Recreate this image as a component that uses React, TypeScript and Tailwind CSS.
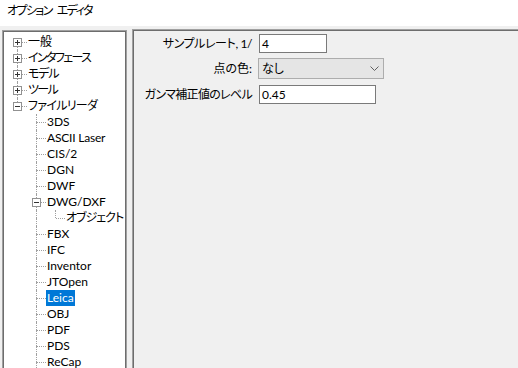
import React from 'react';

type Row = { t: string; d: number; box?: '+' | '-'; last?: boolean; first?: boolean; sel?: boolean; tr?: string };

const rows: Row[] = [
  { t: '一般', d: 0, box: '+', first: true },
  { t: 'インタフェース', d: 0, box: '+', tr: 'tracking-[-1.6px]' },
  { t: 'モデル', d: 0, box: '+', tr: 'tracking-[-1.2px]' },
  { t: 'ツール', d: 0, box: '+', tr: 'tracking-[-1.6px]' },
  { t: 'ファイルリーダ', d: 0, box: '-', last: true, tr: 'tracking-[-0.7px]' },
  { t: '3DS', d: 1 },
  { t: 'ASCII Laser', d: 1, tr: 'tracking-[-0.2px]' },
  { t: 'CIS/2', d: 1 },
  { t: 'DGN', d: 1 },
  { t: 'DWF', d: 1 },
  { t: 'DWG/DXF', d: 1, box: '-' },
  { t: 'オブジェクト プロパティ', d: 2, last: true, tr: 'tracking-[-1px]' },
  { t: 'FBX', d: 1 },
  { t: 'IFC', d: 1 },
  { t: 'Inventor', d: 1 },
  { t: 'JTOpen', d: 1 },
  { t: 'Leica', d: 1, sel: true },
  { t: 'OBJ', d: 1 },
  { t: 'PDF', d: 1 },
  { t: 'PDS', d: 1 },
  { t: 'ReCap', d: 1 },
];

const VLine = ({ top, bottom }: { top: boolean; bottom: boolean }) => (
  <>
    {top && <span className="absolute left-[9px] top-0 h-[8px] border-l border-dotted border-[#a0a0a0]" />}
    {bottom && <span className="absolute left-[9px] top-[8px] h-[8px] border-l border-dotted border-[#a0a0a0]" />}
  </>
);

const ExpandBox = ({ kind }: { kind: '+' | '-' }) => (
  <span className="absolute left-[5px] top-[4px] h-[9px] w-[9px] border border-[#919191] bg-white">
    <span className="absolute left-[1px] top-[3px] h-px w-[5px] bg-[#333]" />
    {kind === '+' && <span className="absolute left-[3px] top-[1px] h-[5px] w-px bg-[#333]" />}
  </span>
);

const TreeRow = ({ r }: { r: Row }) => {
  // ancestor columns: level 0 ended (ファイルリーダ is last), level 1 continues
  const ancestors = [];
  for (let i = 0; i < r.d; i++) {
    ancestors.push(
      <span key={i} className="relative h-4 w-[19px] shrink-0">
        {i === 1 && <VLine top bottom />}
      </span>
    );
  }
  return (
    <div className="flex h-4 items-center whitespace-nowrap">
      {ancestors}
      <span className="relative h-4 w-[19px] shrink-0">
        <VLine top={!r.first} bottom={!r.last} />
        <span className="absolute left-[10px] top-[8px] w-[9px] border-t border-dotted border-[#a0a0a0]" />
        {r.box && <ExpandBox kind={r.box} />}
      </span>
      <span className={`px-px leading-[16px] ${r.tr ?? ''} ${r.sel ? 'bg-[#0078d7] text-white' : 'text-black'}`}>{r.t}</span>
    </div>
  );
};

export default function App() {
  return (
    <div className="h-[368px] w-[518px] overflow-hidden bg-[#f0f0f0] font-['Lato','Noto_Sans_CJK_JP',sans-serif] text-[12px] text-black [font-feature-settings:'palt']">
      <div className="flex h-[26px] gap-[5px] bg-white pl-[7px] pt-[3px] leading-[16px] tracking-[-1.6px]">
        <span>オプション</span>
        <span>エディタ</span>
      </div>
      <div className="flex pl-[2px] pt-[3px]">
        <div className="mt-px h-[400px] w-[125px] shrink-0 border border-b-0 border-[#a0a0a0]">
          <div className="h-full overflow-hidden border border-b-0 border-[#6d6d6d] bg-white pl-[4px] pt-[2px]">
            {rows.map((r, i) => (
              <TreeRow key={i} r={r} />
            ))}
          </div>
        </div>
        <div className="ml-[5px] h-[400px] flex-1 border-l border-t border-[#a0a0a0]">
          <div className="h-full border-l border-t border-[#6d6d6d] pt-[3px]">
            <div className="flex h-[19px] items-center">
              <span className="w-[118px] text-right tracking-[-0.4px]">サンプルレート,&nbsp;1/</span>
              <div className="ml-[7px] flex h-[19px] w-[68px] items-center border border-[#7a7a7a] bg-white pl-[2px]">4</div>
            </div>
            <div className="mt-[5px] flex h-[21px] items-center">
              <span className="w-[118px] text-right">点の色:</span>
              <div className="ml-[6px] flex h-[21px] w-[126px] items-center justify-between border border-[#adadad] bg-[#e5e5e5] pl-[3px] pr-[4px]">
                <span>なし</span>
                <svg width="9" height="5" viewBox="0 0 9 5" fill="none">
                  <path d="M0.5 0.5 L4.5 4.5 L8.5 0.5" stroke="#606060" strokeWidth="1" />
                </svg>
              </div>
            </div>
            <div className="mt-[6px] flex h-[19px] items-center">
              <span className="w-[118px] text-right tracking-[-0.7px]">ガンマ補正値のレベル</span>
              <div className="ml-[7px] flex h-[19px] w-[117px] items-center border border-[#7a7a7a] bg-white pl-[2px]">0.45</div>
            </div>
          </div>
        </div>
      </div>
    </div>
  );
}
